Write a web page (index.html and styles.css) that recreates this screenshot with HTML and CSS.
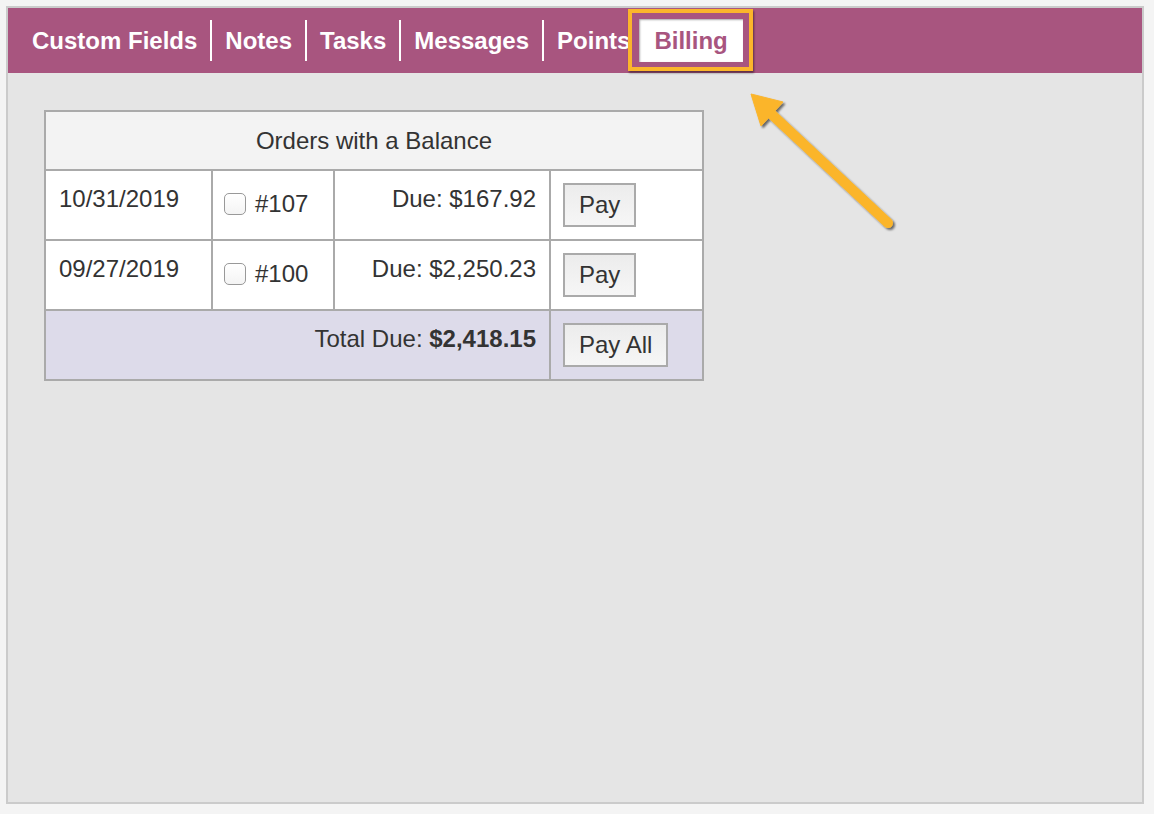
FILE: index.html
```html
<!DOCTYPE html>
<html lang="en">
<head>
    <meta charset="UTF-8">
    <meta name="viewport" content="width=device-width, initial-scale=1.0">
    <title>Billing</title>
    <link rel="stylesheet" href="styles.css">
</head>
<body>

<div class="panel">
    <!-- Tabs -->
    <ul class="tabs">
        <li>Custom Fields</li>
        <li>Notes</li>
        <li>Tasks</li>
        <li>Messages</li>
        <li>Points</li>
        <li class="active">Billing</li>
    </ul>

    <div class="panel-body">
        <table class="balance">
            <tr>
                <th colspan="4">Orders with a Balance</th>
            </tr>
            <tr>
                <td class="col-date">10/31/2019</td>
                <td class="col-order"><span class="check"></span>#107</td>
                <td class="col-due">Due: $167.92</td>
                <td class="col-pay"><button type="button">Pay</button></td>
            </tr>
            <tr>
                <td class="col-date">09/27/2019</td>
                <td class="col-order"><span class="check"></span>#100</td>
                <td class="col-due">Due: $2,250.23</td>
                <td class="col-pay"><button type="button">Pay</button></td>
            </tr>
            <tr class="total">
                <td colspan="3" class="col-due">Total Due: <b>$2,418.15</b></td>
                <td class="col-pay"><button type="button">Pay All</button></td>
            </tr>
        </table>
    </div>

    <!-- annotation arrow -->
    <svg class="arrow" width="180" height="170" viewBox="0 0 180 170">
        <defs>
            <filter id="shadow" x="-20%" y="-20%" width="140%" height="140%">
                <feDropShadow dx="2" dy="2" stdDeviation="1.2" flood-color="#000" flood-opacity="0.55"/>
            </filter>
        </defs>
        <g filter="url(#shadow)" fill="#fbb52b" stroke="#fbb52b">
            <line x1="154" y1="145" x2="32" y2="31" stroke-width="10" stroke-linecap="round"/>
            <polygon points="17,16 49,24 27,48" stroke-width="1"/>
        </g>
    </svg>
</div>

</body>
</html>
```

FILE: styles.css
```css
body {
    margin: 0;
    padding: 6px;
    background: #f4f4f4;
    font-family: "Liberation Sans", Arial, sans-serif;
    color: #333;
}

.panel {
    position: relative;
    width: 1134px;
    height: 794px;
    border: 2px solid #cbcbcb;
    background: #e5e5e5;
}

.tabs {
    display: flex;
    align-items: center;
    height: 65px;
    margin: 0;
    padding: 0 0 0 11px;
    list-style: none;
    background: #a8557f;
}

.tabs li {
    position: relative;
    height: 41px;
    line-height: 41px;
    padding: 0 13px;
    color: #fff;
    font-size: 24px;
    font-weight: bold;
}

.tabs li + li {
    border-left: 2px solid #fff;
}

.tabs li.active {
    height: 43px;
    line-height: 43px;
    margin-left: -4px;
    padding: 0 15px;
    border-left: none;
    background: #fff;
    color: #a8557f;
    box-shadow: inset 1px 1px 2px rgba(0, 0, 0, 0.35);
}

/* highlight box around the active tab */
.tabs li.active::after {
    content: "";
    position: absolute;
    top: -10px;
    left: -11px;
    right: -10px;
    bottom: -9px;
    border: 4px solid #fbb52b;
    box-shadow: 1px 2px 2px rgba(0, 0, 0, 0.45);
}

.panel-body {
    padding: 37px 0 0 36px;
}

.balance {
    border-collapse: collapse;
    border: 2px solid #aaa;
    font-size: 24px;
}

.balance th,
.balance td {
    border: 2px solid #aaa;
    vertical-align: top;
}

.balance th {
    height: 55px;
    background: #f3f3f3;
    font-weight: normal;
    text-align: center;
    vertical-align: middle;
}

.balance td {
    height: 42px;
    padding: 12px 13px;
    background: #fff;
}

.balance .col-date {
    width: 139px;
    padding-top: 14px;
}

.balance .col-order {
    width: 98px;
    padding: 19px 11px 0;
}

.balance .col-due {
    width: 188px;
    padding-top: 14px;
    text-align: right;
}

.balance .col-pay {
    width: 126px;
    padding-left: 12px;
}

.balance .total td {
    background: #dddbea;
}

.check {
    display: inline-block;
    width: 20px;
    height: 20px;
    margin-right: 9px;
    vertical-align: -3px;
    border: 1px solid #999;
    border-radius: 5px;
    background: linear-gradient(#fff, #f4f4f4);
}

.balance button {
    height: 44px;
    padding: 0 14px;
    border: 2px solid #aaa;
    background: linear-gradient(#ececec, #f6f6f6);
    color: #333;
    font-family: inherit;
    font-size: 24px;
    cursor: pointer;
}

.arrow {
    position: absolute;
    top: 70px;
    left: 726px;
}
```
